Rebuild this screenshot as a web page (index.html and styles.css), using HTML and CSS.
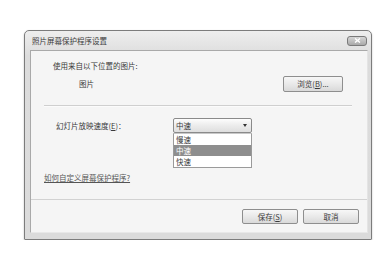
FILE: index.html
```html
<!DOCTYPE html>
<html lang="zh">
<head>
<meta charset="utf-8">
<title>照片屏幕保护程序设置</title>
<link rel="stylesheet" href="styles.css">
</head>
<body>
<div class="window">
  <div class="titlebar">
    <span class="title">照片屏幕保护程序设置</span>
    <div class="close"><svg width="7" height="5" viewBox="0 0 7 5"><path d="M1 0.5 L6 4.5 M6 0.5 L1 4.5" stroke="#fff" stroke-width="1.4"/></svg></div>
  </div>
  <div class="client">
    <div class="content">
      <p class="intro">使用来自以下位置的图片:</p>
      <div class="source-row">
        <span class="source">图片</span>
        <button class="btn browse">浏览(<u>B</u>)...</button>
      </div>
      <div class="sep"></div>
      <div class="speed-row">
        <span class="label">幻灯片放映速度(<u>E</u>)：</span>
        <div class="combo">
          <span class="combo-value">中速</span>
          <span class="arrow"></span>
          <ul class="list">
            <li>慢速</li>
            <li class="selected">中速</li>
            <li>快速</li>
          </ul>
        </div>
      </div>
      <a class="link" href="#">如何自定义屏幕保护程序?</a>
    </div>
    <div class="footer">
      <button class="btn">保存(<u>S</u>)</button>
      <button class="btn">取消</button>
    </div>
  </div>
</div>
</body>
</html>
```
FILE: styles.css
```css
* { box-sizing: border-box; }
html, body { margin: 0; padding: 0; background: #fff; }
body {
  font-family: "Noto Sans CJK SC", "Noto Sans", sans-serif;
  font-size: 7.5px;
  color: #3a3a3a;
}
.window {
  margin: 30px 0 0 24px;
  width: 348px;
  height: 210px;
  border: 1px solid #7c7c7c;
  border-radius: 5px 5px 1px 1px;
  background: linear-gradient(#eeeeee, #dcdcdc 12%, #dbdbdb);
  padding: 0 3px 6px 5px;
  box-shadow: 0 1px 2px rgba(0,0,0,0.25);
}
.titlebar {
  height: 19px;
  display: flex;
  align-items: center;
  justify-content: space-between;
  padding: 0 1px 0 2px;
}
.title { line-height: 10px; color: #3c3c3c; }
.close {
  width: 20px;
  height: 10px;
  border: 1px solid #7a7a7a;
  border-radius: 3px;
  background: linear-gradient(#d6d6d6, #a9a9a9);
  display: flex;
  align-items: center;
  justify-content: center;
}
.close svg { display: block; }
.client {
  height: 183px;
  border: 1px solid #a9a9a9;
  border-right-color: #e4e4e4;
  border-bottom-color: #e8e8e8;
  background: #f5f5f5;
}
.content {
  height: 148px;
  padding: 10px 15px 0 13px;
  display: flex;
  flex-direction: column;
  align-items: flex-start;
}
.intro {
  margin: 0 0 0 9px;
  line-height: 10px;
}
.source-row {
  margin-top: 5px;
  width: 100%;
  height: 16px;
  display: flex;
  align-items: center;
  justify-content: space-between;
  padding: 0 9px 0 35px;
}
.source { line-height: 10px; }
.btn {
  font: inherit;
  color: #3a3a3a;
  height: 15px;
  width: 56px;
  padding: 0;
  border: 1px solid #8e8e8e;
  border-radius: 2px;
  background: linear-gradient(#f7f7f7, #e9e9e9 50%, #d9d9d9);
  line-height: 12px;
  text-align: center;
}
.btn u { text-decoration: underline; }
.browse { width: 60px; height: 16px; }
.sep {
  margin-top: 13px;
  width: 100%;
  height: 2px;
  border-top: 1px solid #cfcfcf;
  border-bottom: 1px solid #fbfbfb;
}
.speed-row {
  margin-top: 11px;
  width: 100%;
  display: grid;
  grid-template-columns: 129px 79px;
  align-items: center;
}
.label { padding-left: 12px; line-height: 10px; }
.combo {
  position: relative;
  height: 15px;
  border: 1px solid #8a8a8a;
  border-radius: 2px;
  background: linear-gradient(#fdfdfd, #ececec 50%, #dedede);
  display: flex;
  align-items: center;
  justify-content: space-between;
  padding: 0 4px 0 2px;
}
.combo-value { line-height: 10px; }
.arrow {
  width: 0;
  height: 0;
  border-left: 2.5px solid transparent;
  border-right: 2.5px solid transparent;
  border-top: 3px solid #333;
}
.list {
  position: absolute;
  top: 14px;
  left: -1px;
  width: 79px;
  margin: 0;
  padding: 0;
  list-style: none;
  background: #fff;
  border: 1px solid #9a9a9a;
  border-top-color: #c8c8c8;
}
.list li {
  height: 11px;
  line-height: 11px;
  padding-left: 2px;
}
.list li.selected {
  background: #8e8e8e;
  color: #fff;
}
.link {
  margin-top: 40px;
  line-height: 10px;
  color: #555;
  text-decoration: underline;
}
.footer {
  border-top: 1px solid #d2d2d2;
  padding: 9px 8px 0 0;
  display: flex;
  justify-content: flex-end;
  gap: 5px;
}
```
